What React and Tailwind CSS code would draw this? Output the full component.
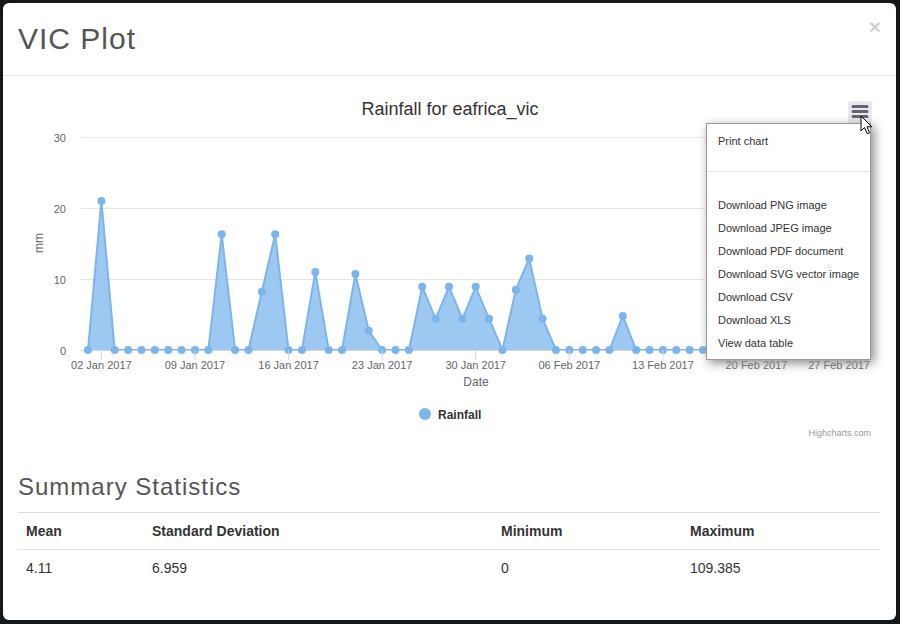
const RAIN = [
  0, 21, 0, 0, 0, 0, 0, 0, 0, 0, 16.3, 0, 0, 8.2, 16.3, 0, 0, 11, 0, 0, 10.7, 2.7, 0, 0, 0,
  8.9, 4.4, 8.9, 4.4, 8.9, 4.4, 0, 8.5, 12.9, 4.4, 0, 0, 0, 0, 0, 4.8, 0, 0, 0, 0, 0, 0, 0,
  0, 0, 0, 0, 0, 0, 0, 0, 0, 0, 0,
];

const X0 = 88;
const DAY = 13.37;
const Y0 = 350;
const UNIT = 7.1;

const TICKS = [
  ["02 Jan 2017", 1],
  ["09 Jan 2017", 8],
  ["16 Jan 2017", 15],
  ["23 Jan 2017", 22],
  ["30 Jan 2017", 29],
  ["06 Feb 2017", 36],
  ["13 Feb 2017", 43],
  ["20 Feb 2017", 50],
  ["27 Feb 2017", 57],
];

const MENU_ITEMS = [
  "Download PNG image",
  "Download JPEG image",
  "Download PDF document",
  "Download SVG vector image",
  "Download CSV",
  "Download XLS",
  "View data table",
];

const STATS = [
  ["Mean", "4.11", "w-[126px]"],
  ["Standard Deviation", "6.959", "w-[349px]"],
  ["Minimum", "0", "w-[189px]"],
  ["Maximum", "109.385", ""],
];

function px(i) {
  return X0 + i * DAY;
}

function py(v) {
  return Y0 - v * UNIT;
}

function RainChart() {
  const pts = RAIN.map((v, i) => [px(i), py(v)]);
  const line = pts.map(([x, y], i) => `${i ? "L" : "M"}${x.toFixed(1)} ${y.toFixed(1)}`).join(" ");
  const last = pts[pts.length - 1];
  const area = `${line} L${last[0].toFixed(1)} ${Y0} L${X0} ${Y0} Z`;

  return (
    <div className="relative h-[357px]">
      <svg width="863" height="357" viewBox="18 91 863 357" className="block">
        <text x="450" y="115" textAnchor="middle" fontSize="18" fill="#333">
          Rainfall for eafrica_vic
        </text>

        {[10, 20, 30].map((v) => (
          <line key={v} x1="81" x2="870" y1={py(v) + 0.5} y2={py(v) + 0.5} stroke="#e6e6e6" />
        ))}
        {[0, 10, 20, 30].map((v) => (
          <text key={v} x="66" y={py(v) + 5} textAnchor="end" fontSize="11" fill="#666">
            {v}
          </text>
        ))}
        <text
          x="42.5"
          y="243"
          textAnchor="middle"
          fontSize="12"
          fill="#666"
          transform="rotate(-90 42.5 243)"
        >
          mm
        </text>

        <path d={area} fill="#7cb5ec" fillOpacity="0.75" />
        <path d={line} fill="none" stroke="#7cb5ec" strokeWidth="2" strokeLinejoin="round" />
        <line x1="81" x2="870" y1={Y0 + 0.5} y2={Y0 + 0.5} stroke="#ccd6eb" />
        {pts.map(([x, y], i) => (
          <circle key={i} cx={x} cy={y} r="4" fill="#7cb5ec" />
        ))}

        {TICKS.map(([label, i], k) => {
          const isLast = k === TICKS.length - 1;
          return (
            <g key={label}>
              <line x1={px(i)} x2={px(i)} y1={Y0} y2={Y0 + 10} stroke="#ccd6eb" />
              <text
                x={isLast ? 870 : px(i)}
                y="369"
                textAnchor={isLast ? "end" : "middle"}
                fontSize="11"
                fill="#666"
              >
                {label}
              </text>
            </g>
          );
        })}
        <text x="476" y="386" textAnchor="middle" fontSize="12" fill="#666">
          Date
        </text>

        <circle cx="425" cy="414" r="6" fill="#7cb5ec" />
        <text x="438" y="418.5" fontSize="12" fontWeight="bold" fill="#333">
          Rainfall
        </text>
        <text x="871" y="436" textAnchor="end" fontSize="9" fill="#999">
          Highcharts.com
        </text>

        <rect x="848" y="101" width="24" height="22" rx="2" fill="#e6e9f2" />
        {[106.5, 111.5, 116.5].map((y) => (
          <line key={y} x1="853" x2="867" y1={y} y2={y} stroke="#666" strokeWidth="3" strokeLinecap="round" />
        ))}
      </svg>

      <div className="absolute left-[688px] top-[32px] w-[165px] border border-[#999] bg-white pt-[6px] pb-[4px] shadow-[3px_3px_10px_#888] text-[11px] text-[#333]">
        <div className="h-[23px] px-[11px] leading-[23px]">Print chart</div>
        <div className="h-[18px]" />
        <div className="h-px bg-[#e6e6e6]" />
        <div className="h-[22px]" />
        {MENU_ITEMS.map((item) => (
          <div key={item} className="h-[23px] px-[11px] leading-[23px] whitespace-nowrap">
            {item}
          </div>
        ))}
      </div>

      <svg width="14" height="21" viewBox="0 0 14 21" className="absolute left-[842px] top-[24px]">
        <path
          d="M1 1 L1 16 L4.5 12.5 L7.2 18.8 L9.6 17.8 L7 11.8 L11.8 11.8 Z"
          fill="#fff"
          stroke="#000"
          strokeWidth="1"
          strokeLinejoin="round"
        />
      </svg>
    </div>
  );
}

export default function App() {
  return (
    <div className="h-[624px] w-[900px] overflow-hidden bg-[#15181b] p-[3px] font-['Liberation_Sans',Arial,sans-serif]">
      <div className="h-[617px] w-[893px] overflow-hidden rounded-md bg-white">
        <header className="flex items-start justify-between border-b border-[#e5e5e5] px-[15px] pt-[15px] pb-[16px]">
          <h1 className="text-[30px] leading-[41px] tracking-[1px] text-[#555]">VIC Plot</h1>
          <span className="-mt-[2px] text-[21px] font-bold leading-none text-black/20">×</span>
        </header>

        <div className="p-[15px]">
          <RainChart />

          <h3 className="mt-[26px] mb-[12px] text-[24px] leading-[26px] tracking-[1px] text-[#555]">
            Summary Statistics
          </h3>

          <table className="w-[862px] border-collapse text-[14px] text-[#333]">
            <thead>
              <tr className="border-y border-[#ddd]">
                {STATS.map(([label, , w]) => (
                  <th key={label} className={`${w} px-2 py-2 text-left font-bold leading-5`}>
                    {label}
                  </th>
                ))}
              </tr>
            </thead>
            <tbody>
              <tr>
                {STATS.map(([label, value]) => (
                  <td key={label} className="px-2 py-2 leading-5">
                    {value}
                  </td>
                ))}
              </tr>
            </tbody>
          </table>
        </div>
      </div>
    </div>
  );
}
